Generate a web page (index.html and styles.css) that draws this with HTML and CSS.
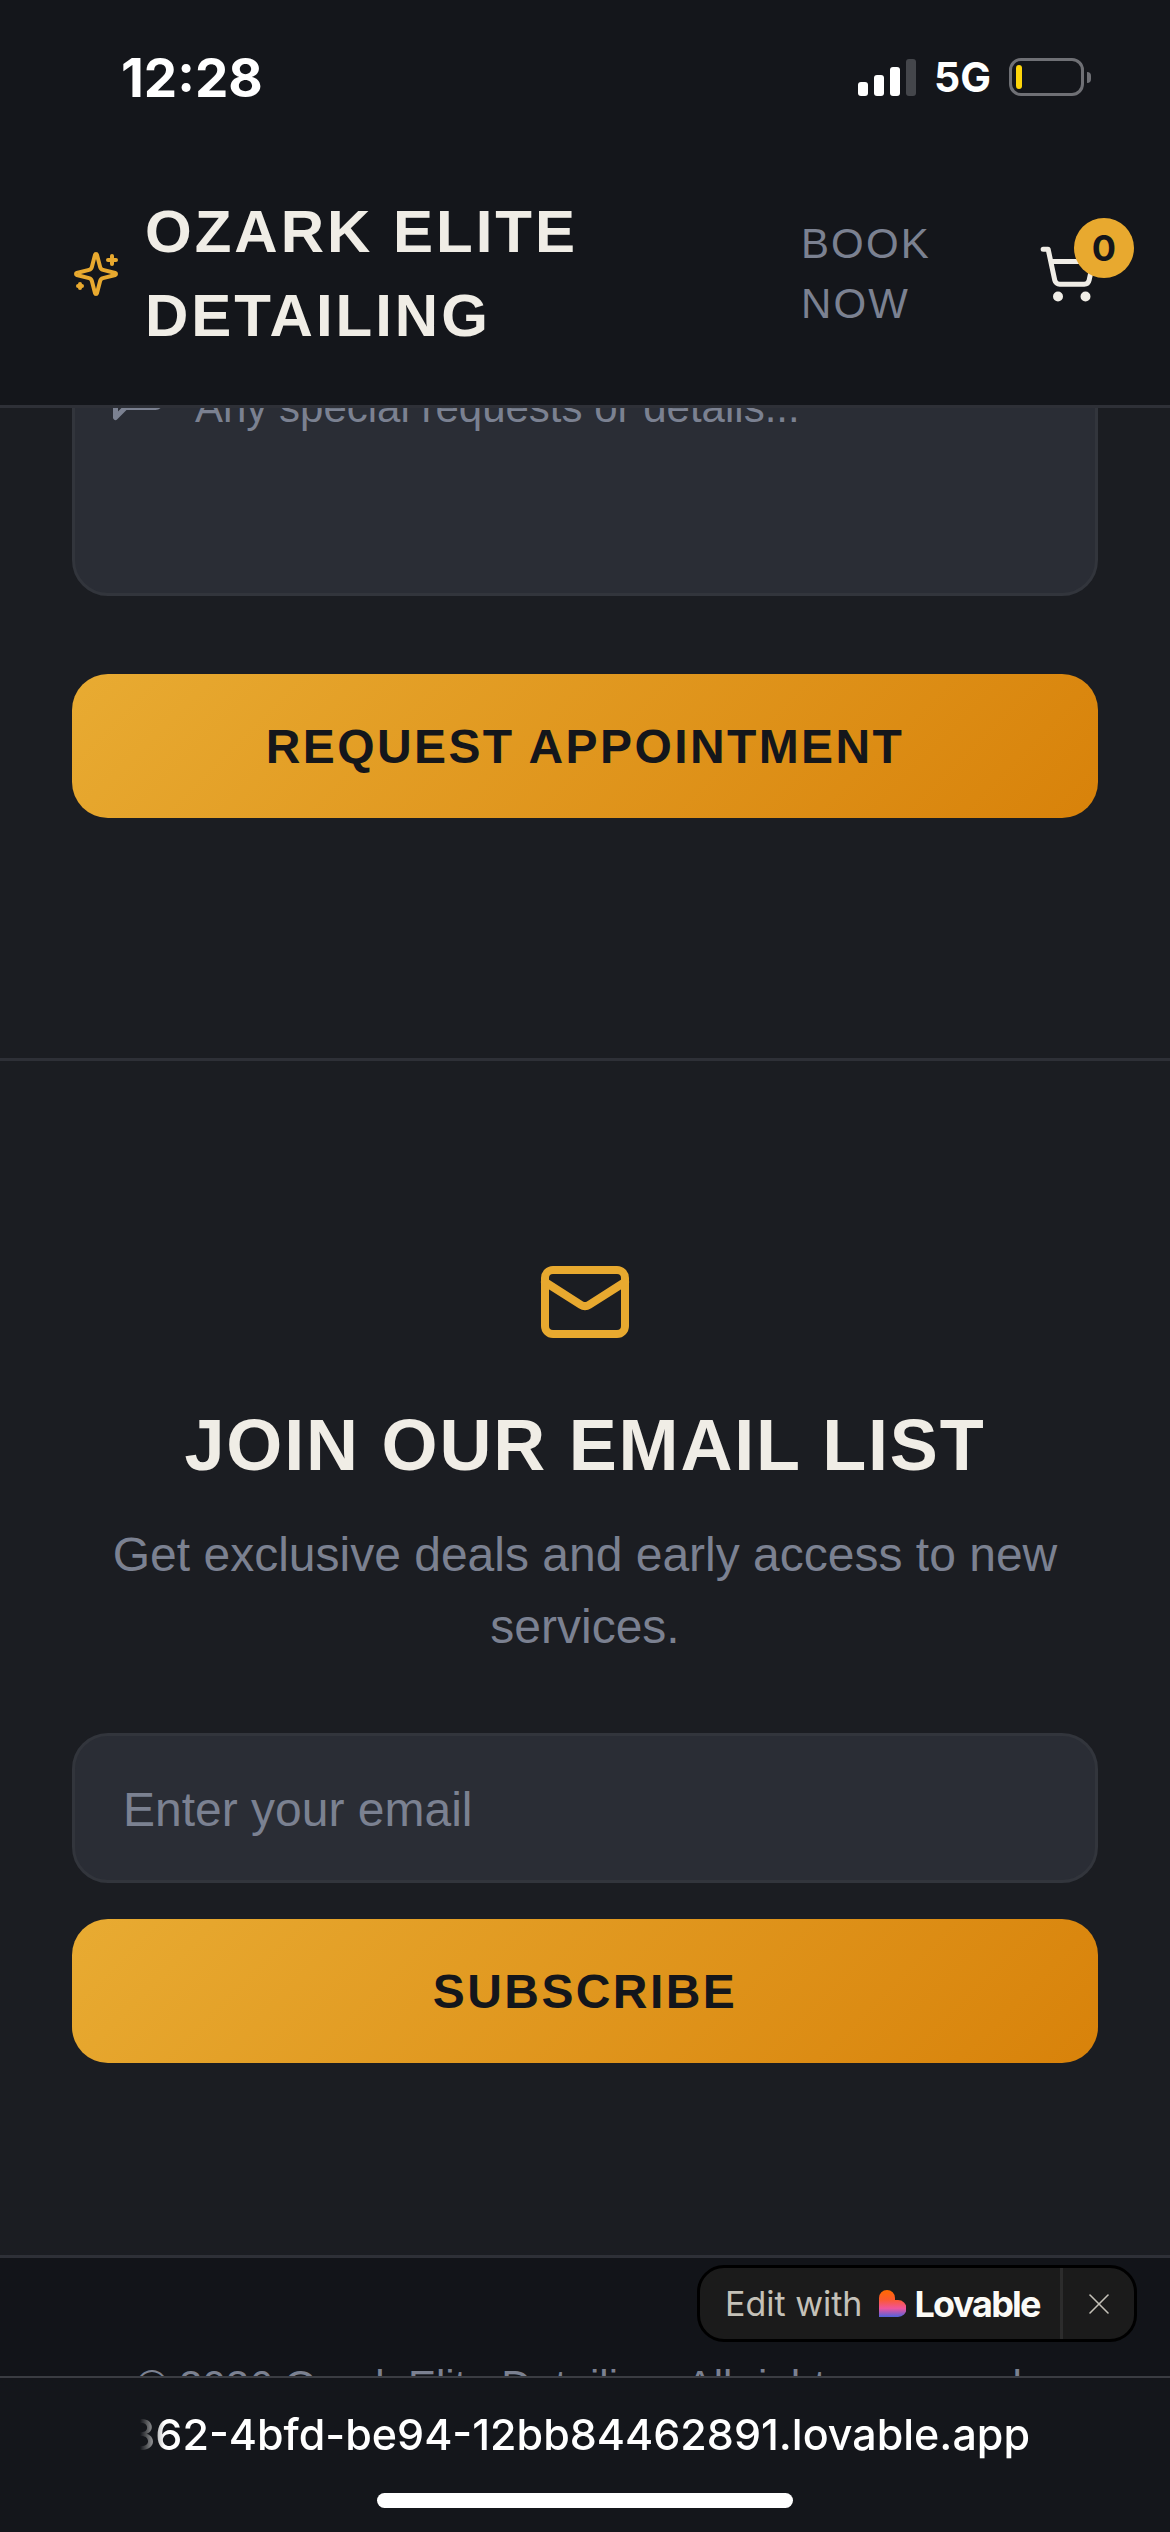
FILE: index.html
```html
<!DOCTYPE html>
<html lang="en">
<head>
<meta charset="UTF-8">
<meta name="viewport" content="width=device-width, initial-scale=1.0">
<title>Ozark Elite Detailing</title>
<link rel="stylesheet" href="styles.css">
</head>
<body>
    <div class="phone">
        <header class="top">
            <div class="status-bar">
                <span class="clock">12:28</span>
                <div class="status-icons">
                    <div class="signal">
                        <i class="bar bar-1"></i>
                        <i class="bar bar-2"></i>
                        <i class="bar bar-3"></i>
                        <i class="bar bar-4"></i>
                    </div>
                    <span class="network">5G</span>
                    <div class="battery">
                        <div class="battery-body"><i class="battery-level"></i></div>
                        <i class="battery-nub"></i>
                    </div>
                </div>
            </div>
            <nav class="nav">
                <svg class="logo-icon" viewBox="0 0 24 24" fill="none" stroke="currentColor" stroke-width="2" stroke-linecap="round" stroke-linejoin="round">
                    <path d="M9.937 15.5A2 2 0 0 0 8.5 14.063l-6.135-1.582a.5.5 0 0 1 0-.962L8.5 9.936A2 2 0 0 0 9.937 8.5l1.582-6.135a.5.5 0 0 1 .963 0L14.063 8.5A2 2 0 0 0 15.5 9.937l6.135 1.581a.5.5 0 0 1 0 .964L15.5 14.063a2 2 0 0 0-1.437 1.437l-1.582 6.135a.5.5 0 0 1-.963 0z"/>
                    <path d="M20 3v4"/>
                    <path d="M22 5h-4"/>
                    <path d="M4 17v2"/>
                    <path d="M5 18H3"/>
                </svg>
                <a class="brand">OZARK ELITE DETAILING</a>
                <a class="nav-link">BOOK NOW</a>
                <div class="cart">
                    <svg class="cart-icon" viewBox="0 0 24 24" fill="none" stroke="currentColor" stroke-width="2" stroke-linecap="round" stroke-linejoin="round">
                        <circle cx="8" cy="21" r="1"/>
                        <circle cx="19" cy="21" r="1"/>
                        <path d="M2.05 2.05h2l2.66 12.42a2 2 0 0 0 2 1.58h9.78a2 2 0 0 0 1.95-1.57l1.65-7.43H5.12"/>
                    </svg>
                    <span class="cart-count">0</span>
                </div>
            </nav>
        </header>

        <main class="content">
            <section class="booking">
                <div class="field field-notes">
                    <svg class="field-icon" viewBox="0 0 24 24" fill="none" stroke="currentColor" stroke-width="2" stroke-linecap="round" stroke-linejoin="round">
                        <path d="M21 15a2 2 0 0 1-2 2H7l-4 4V5a2 2 0 0 1 2-2h14a2 2 0 0 1 2 2z"/>
                    </svg>
                    <span class="placeholder">Any special requests or details...</span>
                </div>
                <button class="btn btn-request">REQUEST APPOINTMENT</button>
            </section>

            <section class="newsletter">
                <svg class="mail-icon" viewBox="0 0 24 24" fill="none" stroke="currentColor" stroke-width="2" stroke-linecap="round" stroke-linejoin="round">
                    <rect x="2" y="4" width="20" height="16" rx="2"/>
                    <path d="m22 7-8.97 5.7a1.94 1.94 0 0 1-2.06 0L2 7"/>
                </svg>
                <h2>JOIN OUR EMAIL LIST</h2>
                <p>Get exclusive deals and early access to new services.</p>
                <div class="field field-email">
                    <span class="placeholder">Enter your email</span>
                </div>
                <button class="btn btn-subscribe">SUBSCRIBE</button>
            </section>
        </main>

        <footer class="footer">
            <p class="copyright">© 2026 Ozark Elite Detailing. All rights reserved.</p>
            <div class="lovable-badge">
                <a class="lovable-link">
                    <span class="edit-with">Edit with</span>
                    <svg class="lovable-heart" viewBox="0 0 27 27">
                        <defs>
                            <linearGradient id="heart-fill" x1="0" y1="0" x2="0" y2="1">
                                <stop offset="0" stop-color="#ff6a00"/>
                                <stop offset="0.35" stop-color="#fb5a2c"/>
                                <stop offset="0.68" stop-color="#f0549c"/>
                                <stop offset="1" stop-color="#4f62dc"/>
                            </linearGradient>
                        </defs>
                        <path fill="url(#heart-fill)" d="M8 0a8 8 0 0 1 8 8v2h3a8.500 8.500 0 0 1 0 17H0V8a8 8 0 0 1 8-8z"/>
                    </svg>
                    <span class="lovable-name">Lovable</span>
                </a>
                <div class="lovable-close">
                    <svg viewBox="0 0 24 24" fill="none" stroke="currentColor" stroke-width="1.6" stroke-linecap="round">
                        <path d="M3 3l18 18"/>
                        <path d="M21 3L3 21"/>
                    </svg>
                </div>
            </div>
        </footer>

        <div class="browser-bar">
            <div class="url"><span>862-4bfd-be94-12bb84462891.lovable.app</span></div>
            <div class="home-indicator"></div>
        </div>
    </div>
</body>
</html>
```
FILE: styles.css
```css
* {
    box-sizing: border-box;
}
body {
    margin: 0;
    background-color: #1b1d22;
    font-family: "Liberation Sans", Arial, sans-serif;
}
.phone {
    width: 1170px;
    height: 2532px;
    overflow: hidden;
    display: flex;
    flex-direction: column;
}

/* status bar + nav */
.top {
    flex: none;
    height: 408px;
    background-color: #14161b;
    border-bottom: 3px solid #2e3037;
}
.status-bar {
    height: 142px;
    padding: 0 79px 0 121px;
    display: flex;
    justify-content: space-between;
    align-items: flex-start;
    color: #fff;
}
.clock {
    margin-top: 47px;
    font-family: Inter, sans-serif;
    font-size: 53px;
    line-height: 62px;
    font-weight: 700;
}
.status-icons {
    margin-top: 58px;
    display: flex;
    align-items: center;
    gap: 18px;
}
.signal {
    display: flex;
    align-items: flex-end;
    gap: 6px;
    height: 38px;
}
.bar {
    width: 10px;
    border-radius: 3px;
    background-color: #fff;
}
.bar-1 { height: 14px; }
.bar-2 { height: 21px; }
.bar-3 { height: 29px; }
.bar-4 { height: 37px; background-color: #44464b; }
.network {
    font-family: Inter, sans-serif;
    font-size: 41px;
    line-height: 38px;
    font-weight: 700;
}
.battery {
    display: flex;
    align-items: center;
    gap: 3px;
}
.battery-body {
    width: 75px;
    height: 38px;
    padding: 4px;
    border: 3px solid #6f7075;
    border-radius: 12px;
}
.battery-level {
    display: block;
    width: 6px;
    height: 24px;
    border-radius: 3px;
    background-color: #ffd60a;
}
.battery-nub {
    width: 4px;
    height: 11px;
    border-radius: 0 6px 6px 0;
    background-color: #6f7075;
}
.nav {
    padding: 48px 72px 0;
    display: flex;
    align-items: center;
}
.logo-icon {
    flex: none;
    width: 48px;
    height: 48px;
    margin-right: 25px;
    color: #e8a92f;
}
.brand {
    width: 470px;
    font-size: 60px;
    line-height: 84px;
    font-weight: 700;
    letter-spacing: 3px;
    color: #f0ede6;
}
.nav-link {
    width: 150px;
    margin-left: 186px;
    font-size: 42px;
    line-height: 60px;
    letter-spacing: 2.1px;
    color: #7b8191;
}
.cart {
    position: relative;
    width: 60px;
    height: 60px;
    margin-left: auto;
    color: #f0ede6;
}
.cart-icon {
    display: block;
    width: 60px;
    height: 60px;
}
.cart-count {
    position: absolute;
    top: -26px;
    right: -36px;
    width: 60px;
    height: 60px;
    border-radius: 50%;
    background-color: #e8a92f;
    color: #14161b;
    font-family: Inter, sans-serif;
    font-size: 36px;
    font-weight: 700;
    line-height: 60px;
    text-align: center;
}

/* page content, scrolled partly under the nav */
.content {
    flex: 1;
    min-height: 0;
    overflow: hidden;
}
.booking {
    margin-top: -76px;
    padding: 0 72px 240px;
    border-bottom: 3px solid #2e3037;
}
.field {
    display: flex;
    align-items: center;
    background-color: #2a2d35;
    border: 3px solid #32353c;
    border-radius: 36px;
    font-size: 48px;
    line-height: 72px;
    color: #7b8191;
}
.field-notes {
    height: 264px;
    padding: 35px 33px;
    align-items: flex-start;
    gap: 27px;
    font-size: 42px;
    line-height: 60px;
}
.field-notes .placeholder {
    margin-top: 8px;
}
.field-icon {
    flex: none;
    width: 60px;
    height: 60px;
    margin-top: -5px;
}
.btn {
    display: block;
    width: 100%;
    height: 144px;
    border: none;
    border-radius: 36px;
    background: linear-gradient(135deg, #e8ab32, #d8820a);
    color: #14161b;
    font-family: inherit;
    font-size: 48px;
    font-weight: 700;
    letter-spacing: 2.4px;
}
.btn-request {
    margin-top: 78px;
}
.newsletter {
    padding: 193px 72px 0;
    display: flex;
    flex-direction: column;
    align-items: center;
    text-align: center;
}
.mail-icon {
    width: 96px;
    height: 96px;
    color: #e8a92f;
}
.newsletter h2 {
    margin: 55px 0 0;
    font-size: 72px;
    line-height: 80px;
    font-weight: 700;
    letter-spacing: 1.8px;
    color: #f0ede6;
}
.newsletter p {
    margin: 34px 0 0;
    font-size: 48px;
    line-height: 72px;
    color: #7b8191;
}
.field-email {
    width: 100%;
    height: 150px;
    margin-top: 70px;
    padding: 4px 48px 0;
}
.btn-subscribe {
    margin-top: 36px;
}

/* footer, cut off by the browser bar */
.footer {
    position: relative;
    flex: none;
    height: 121px;
    background-color: #121419;
    border-top: 3px solid #2e3037;
}
.copyright {
    margin: 104px 0 0;
    font-size: 42px;
    line-height: 48px;
    text-align: center;
    color: #7b8191;
}
.lovable-badge {
    position: absolute;
    top: 7px;
    right: 33px;
    width: 440px;
    height: 77px;
    display: flex;
    align-items: stretch;
    background-color: #1b1b1b;
    border: 3px solid #000;
    border-radius: 27px;
}
.lovable-link {
    flex: 1;
    padding-left: 25px;
    display: flex;
    align-items: center;
    white-space: nowrap;
}
.edit-with {
    font-family: Inter, sans-serif;
    font-size: 34px;
    color: #c4c1b8;
}
.lovable-heart {
    flex: none;
    width: 27px;
    height: 27px;
    margin-left: 17px;
}
.lovable-name {
    margin-left: 8px;
    font-family: Inter, sans-serif;
    font-size: 36px;
    font-weight: 700;
    letter-spacing: -1.8px;
    color: #fbfaf6;
}
.lovable-close {
    flex: none;
    width: 74px;
    display: flex;
    align-items: center;
    justify-content: center;
    border-left: 3px solid #2c2c2c;
    color: #c4c1b8;
}
.lovable-close svg {
    width: 24px;
    height: 24px;
}

/* browser address bar */
.browser-bar {
    position: relative;
    flex: none;
    height: 156px;
    background-color: #14161b;
    border-top: 2px solid #3a3c42;
    color: #fff;
}
.url {
    width: 890px;
    margin: 28px 0 0 140px;
    display: flex;
    justify-content: flex-end;
    overflow: hidden;
    white-space: nowrap;
    font-family: Inter, sans-serif;
    font-size: 43px;
    line-height: 56px;
    font-weight: 500;
    -webkit-mask-image: linear-gradient(to right, transparent, #000 24px);
    mask-image: linear-gradient(to right, transparent, #000 24px);
}
.home-indicator {
    width: 416px;
    height: 15px;
    margin: 31px auto 0;
    border-radius: 8px;
    background-color: #fff;
}
```
